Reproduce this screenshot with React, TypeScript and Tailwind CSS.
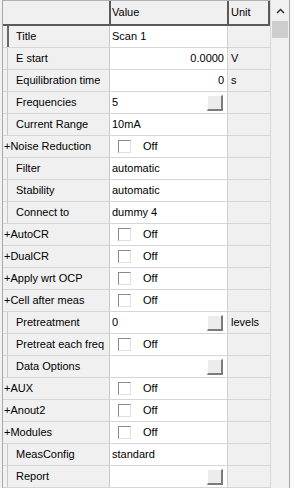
import React from "react";

type Row = {
  name: string;
  plus?: boolean;
  value?: string;
  align?: "left" | "right";
  check?: boolean;
  button?: boolean;
  unit?: string;
  selected?: boolean;
};

const rows: Row[] = [
  { name: "Title", value: "Scan 1", selected: true },
  { name: "E start", value: "0.0000", align: "right", unit: "V" },
  { name: "Equilibration time", value: "0", align: "right", unit: "s" },
  { name: "Frequencies", value: "5", button: true },
  { name: "Current Range", value: "10mA" },
  { name: "Noise Reduction", plus: true, check: true },
  { name: "Filter", value: "automatic" },
  { name: "Stability", value: "automatic" },
  { name: "Connect to", value: "dummy 4" },
  { name: "AutoCR", plus: true, check: true },
  { name: "DualCR", plus: true, check: true },
  { name: "Apply wrt OCP", plus: true, check: true },
  { name: "Cell after meas", plus: true, check: true },
  { name: "Pretreatment", value: "0", button: true, unit: "levels" },
  { name: "Pretreat each freq", check: true },
  { name: "Data Options", button: true },
  { name: "AUX", plus: true, check: true },
  { name: "Anout2", plus: true, check: true },
  { name: "Modules", plus: true, check: true },
  { name: "MeasConfig", value: "standard" },
  { name: "Report", button: true },
];

function Btn() {
  return (
    <div className="absolute left-[97px] top-[3px] w-[16px] h-[16px] bg-[#ececec] border-t border-l border-t-[#ffffff] border-l-[#ffffff] border-r-2 border-b-2 border-r-[#7a7a7a] border-b-[#7a7a7a]" />
  );
}

function Check() {
  return (
    <div className="flex items-center">
      <div className="ml-[6px] w-[13px] h-[13px] bg-white border border-t-[#8a8a8a] border-l-[#8a8a8a] border-r-[#e0e0e0] border-b-[#e0e0e0]" />
      <span className="ml-[12px]">Off</span>
    </div>
  );
}

export default function App() {
  return (
    <div
      className="w-[294px] h-[488px] bg-[#f0f0f0] flex overflow-hidden text-[11px] text-black leading-none"
      style={{ fontFamily: '"Liberation Sans", Arial, sans-serif' }}
    >
      {/* grid */}
      <div className="w-[268px] shrink-0 flex flex-col border-l border-[#a8a8a8] ml-[2px]">
        {/* header */}
        <div className="h-[26px] flex border-t border-[#b0b0b0] border-b-2 border-b-[#5a5a5a] bg-[#f0f0f0] shrink-0">
          <div className="w-[108px] shrink-0 border-r-2 border-[#5a5a5a]" />
          <div className="w-[118px] shrink-0 border-r-2 border-[#5a5a5a] flex items-center pl-[1px]">Value</div>
          <div className="flex-1 flex items-center pl-[2px] border-r-2 border-[#5a5a5a]">Unit</div>
        </div>
        {rows.map((r, i) => (
          <div key={i} className="h-[22px] flex shrink-0 border-b border-[#d6d6d6]">
            {/* name */}
            <div
              className={
                "shrink-0 flex items-center border-r border-[#c8c8c8] bg-[#f0f0f0] whitespace-nowrap " +
                (r.plus ? "w-[107px] pl-[1px] " : "w-[103px] ml-[4px] ") +
                (!r.plus && r.selected ? "border-l-2 border-l-[#6a6a6a] pl-[7px]" : "") +
                (!r.plus && !r.selected ? "border-l border-l-[#c8c8c8] pl-[8px]" : "")
              }
            >
              {r.plus ? "+" + r.name : r.name}
            </div>
            {/* value */}
            <div
              className={
                "relative w-[118px] shrink-0 bg-white flex items-center border-r border-[#d0d0d0] whitespace-nowrap " +
                (r.align === "right" ? "justify-end pr-[3px]" : "pl-[2px]")
              }
            >
              {r.check ? <Check /> : r.value}
              {r.button ? <Btn /> : null}
            </div>
            {/* unit */}
            <div className="flex-1 min-w-0 bg-[#f0f0f0] flex items-center pl-[3px] whitespace-nowrap overflow-visible">{r.unit ?? ""}</div>
          </div>
        ))}
      </div>
      {/* scrollbar */}
      <div className="w-[19px] shrink-0 h-full bg-[#f0f0f0] border-l border-[#d8d8d8] flex flex-col">
        <div className="h-[21px] flex items-center justify-center">
          <svg width="9" height="6" viewBox="0 0 9 6">
            <polyline points="1,5 4.5,1.5 8,5" fill="none" stroke="#333" strokeWidth="1.5" />
          </svg>
        </div>
        <div className="mx-[1px] h-[17px] bg-[#cdcdcd]" />
      </div>
      <div className="flex-1 h-full bg-[#fafafa] border-l border-[#a8a8a8]" />
    </div>
  );
}
